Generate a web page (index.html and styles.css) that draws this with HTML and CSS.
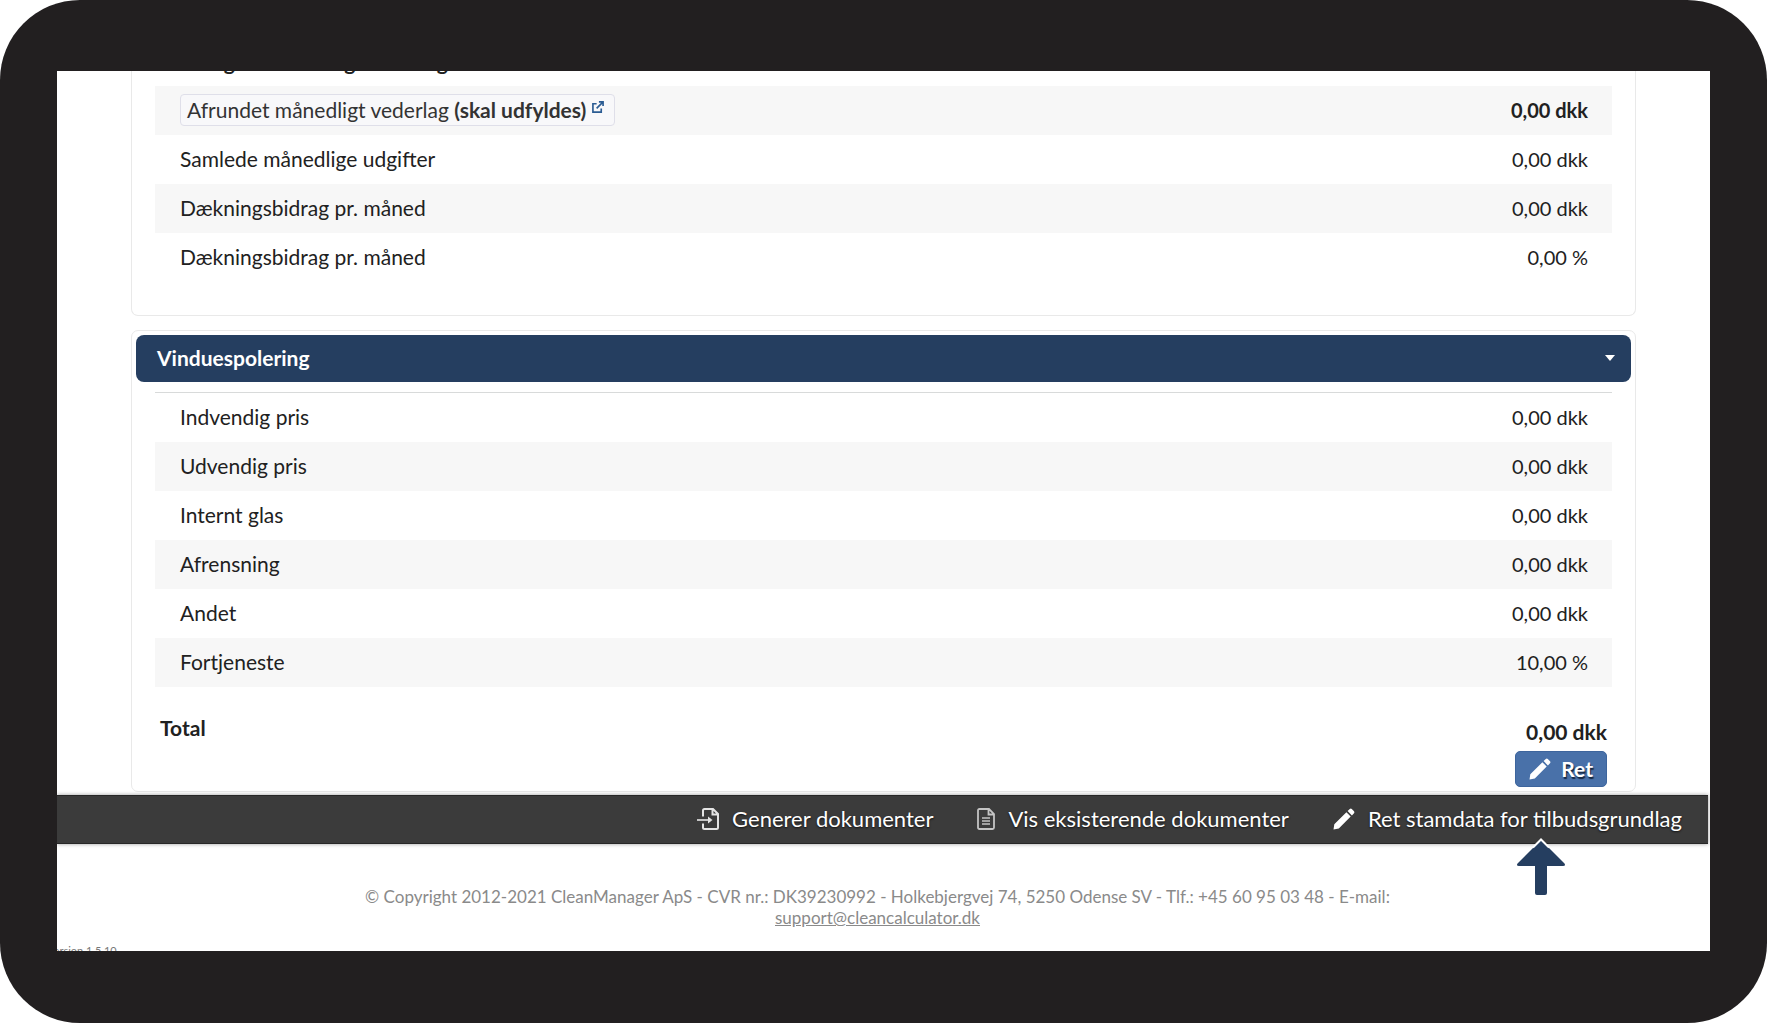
FILE: index.html
```html
<!DOCTYPE html>
<html lang="da">
<head>
  <meta charset="UTF-8" />
  <meta name="viewport" content="width=device-width, initial-scale=1.0"/>
  <title>CleanCalculator</title>
  <link rel="stylesheet" href="styles.css">
</head>
<body>

  <div class="tablet">
    <div class="screen">

      <main class="content">
        <section class="panel panel-first">
          <table class="prices">
            <tr class="scrolled"><th scope="row"><div><b>Beregnet månedligt vederlag</b></div></th><td></td></tr>
            <tr class="striped">
              <th scope="row">
                <a href="#" class="field-link">Afrundet månedligt vederlag <b>(skal udfyldes)</b>
                  <svg width="12" height="12" viewBox="0 0 13 13" fill="none" stroke="#2b5c93" stroke-width="1.800">
                    <path d="M5 3H1v9h9V8M7.500 1H12v4.500M12 1L5 8"/>
                  </svg>
                </a>
              </th>
              <td><b>0,00 dkk</b></td>
            </tr>
            <tr><th scope="row">Samlede månedlige udgifter</th><td>0,00 dkk</td></tr>
            <tr class="striped"><th scope="row">Dækningsbidrag pr. måned</th><td>0,00 dkk</td></tr>
            <tr><th scope="row">Dækningsbidrag pr. måned</th><td>0,00 %</td></tr>
          </table>
        </section>

        <section class="panel panel-windows">
          <button class="panel-header">
            Vinduespolering
            <svg width="10" height="6" viewBox="0 0 10 6"><path d="M0 0h10L5 6z" fill="#fff"/></svg>
          </button>
          <div class="panel-body">
            <table class="prices">
              <tr><th scope="row">Indvendig pris</th><td>0,00 dkk</td></tr>
              <tr class="striped"><th scope="row">Udvendig pris</th><td>0,00 dkk</td></tr>
              <tr><th scope="row">Internt glas</th><td>0,00 dkk</td></tr>
              <tr class="striped"><th scope="row">Afrensning</th><td>0,00 dkk</td></tr>
              <tr><th scope="row">Andet</th><td>0,00 dkk</td></tr>
              <tr class="striped"><th scope="row">Fortjeneste</th><td>10,00 %</td></tr>
            </table>
          </div>
          <div class="total">
            <b>Total</b>
            <div class="total-right">
              <b>0,00 dkk</b>
              <button class="edit">
                <svg width="22" height="22" viewBox="0 0 22 22" fill="#fff">
                  <path d="M0.500 21.500L1.300 16.200 13.400 4.300 17.700 8.600 5.800 20.500zM14.600 3.100L16.800 1Q17.800 0.200 18.800 1L21 3.300Q21.900 4.300 21 5.300L18.900 7.400z"/>
                </svg>
                Ret
              </button>
            </div>
          </div>
        </section>
      </main>

      <nav class="toolbar">
        <button>
          <svg width="22" height="22" viewBox="0 0 22 22" fill="none" stroke="#e4e4e4" stroke-width="2">
            <path d="M6 8.500V2.500Q6 1 7.500 1H16l5 5v13.500Q21 21 19.500 21h-12Q6 21 6 19.500V15.500M15.500 1v5.500H21"/>
            <path d="M0 12h12" stroke="#c4c4c4"/>
            <path d="M11 8.500L15.500 12l-4.500 3.500z" fill="#e4e4e4" stroke="none"/>
          </svg>
          Generer dokumenter
        </button>
        <button>
          <svg width="18" height="22" viewBox="0 0 18 22" fill="none" stroke="#c4c4c4" stroke-width="1.800">
            <path d="M2.500 1H12l5 5v13.500Q17 21 15.500 21h-13Q1 21 1 19.500v-17Q1 1 2.500 1zM11.500 1v5.500H17"/>
            <path d="M5 10h8M5 13h8M5 16h8" stroke-width="1.400"/>
          </svg>
          Vis eksisterende dokumenter
        </button>
        <button>
          <svg width="22" height="22" viewBox="0 0 22 22" fill="#fff">
            <path d="M0.500 21.500L1.300 16.200 13.400 4.300 17.700 8.600 5.800 20.500zM14.600 3.100L16.800 1Q17.800 0.200 18.800 1L21 3.300Q21.900 4.300 21 5.300L18.900 7.400z"/>
          </svg>
          Ret stamdata for tilbudsgrundlag
        </button>
        <svg class="pointer" width="50" height="58" viewBox="0 0 50 58">
          <path d="M25 2L48.500 25.500Q50 28 47 28H31v27q0 2-2 2h-8q-2 0-2-2V28H3Q0 28 1.500 25.500z" fill="#253e60"/>
          <path d="M17 9.500L25 1.500l8 8" fill="none" stroke="#fff" stroke-width="2"/>
        </svg>
      </nav>

      <footer class="footer">
        © Copyright 2012-2021 CleanManager ApS - CVR nr.: DK39230992 - Holkebjergvej 74, 5250 Odense SV - Tlf.: +45 60 95 03 48 - E-mail:<br>
        <a href="mailto:support@cleancalculator.dk">support@cleancalculator.dk</a>
      </footer>
      <small class="version">Version 1.5.10</small>

    </div>
  </div>

</body>
</html>
```
FILE: styles.css
```css
* {
  box-sizing: border-box;
}
body {
  margin: 0;
  background: #fff;
  color: #212121;
  font-family: Lato, "Liberation Sans", sans-serif;
  font-size: 21px;
  line-height: 24px;
}
button {
  border: 0;
  font: inherit;
  color: #fff;
  cursor: pointer;
}
.tablet {
  min-height: 100vh;
  padding: 71px 57px 72px;
  background: #221f20;
  border-radius: 80px;
  display: flex;
}
.screen {
  flex: 1;
  position: relative;
  overflow: hidden;
  background: #fff;
}

/* price panels */
.content {
  padding: 0 74px 3px;
}
.panel {
  border: 1px solid #e9e9e9;
  border-radius: 7px;
}
.panel-first {
  border-top: 0;
  border-radius: 0 0 7px 7px;
  padding: 0 23px 33px;
  margin-bottom: 14px;
}
.prices {
  width: 100%;
  border-collapse: collapse;
}
.prices th,
.prices td {
  height: 49px;
  padding: 0 24px 2px 25px;
  font-weight: normal;
  text-align: left;
}
.prices td {
  font-size: 20px;
  text-align: right;
}
.prices .striped {
  background: #f7f7f7;
}
.prices .scrolled th,
.prices .scrolled td {
  height: 15px;
  padding-bottom: 0;
  vertical-align: top;
}
.scrolled div {
  height: 15px;
  display: flex;
  align-items: flex-end;
  padding-bottom: 12px;
}
.field-link {
  display: inline-block;
  padding: 3px 10px 3px 6px;
  border: 1px solid #dfdfe9;
  border-radius: 4px;
  background: #f8f8fa;
  color: #333;
  text-decoration: none;
}
.field-link svg {
  vertical-align: 5px;
}
.panel-windows {
  padding: 4px;
}
.panel-header {
  width: 100%;
  height: 47px;
  padding: 0 16px 1px 21px;
  border-radius: 8px;
  background: #253e60;
  font-weight: bold;
  display: flex;
  align-items: center;
  justify-content: space-between;
}
.panel-body {
  margin: 10px 19px 0;
  border-top: 1px solid #d8dada;
}
.total {
  padding: 29px 24px 0;
  display: flex;
  justify-content: space-between;
}
.total-right {
  padding-top: 4px;
  display: flex;
  flex-direction: column;
  align-items: flex-end;
  gap: 7px;
}
.edit {
  height: 36px;
  padding: 0 13px;
  border: 1px solid #3d659d;
  border-radius: 5px;
  background: #4971a9;
  font-weight: bold;
  text-shadow: 1px 2px 1px #152741;
  display: flex;
  align-items: center;
  gap: 10px;
}

/* bottom actions */
.toolbar {
  position: relative;
  height: 49px;
  margin-right: 2px;
  padding: 0 26px 2px 0;
  background: #3b3b3b;
  border: solid #272727;
  border-width: 1px 0;
  box-shadow: 0 0 4px rgba(0,0,0,0.4);
  display: flex;
  align-items: center;
  justify-content: flex-end;
  gap: 44px;
}
.toolbar button {
  padding: 0;
  background: none;
  font-size: 22px;
  text-shadow: 0 1px 2px #111;
  display: flex;
  align-items: center;
  gap: 13px;
}
.pointer {
  position: absolute;
  top: 42px;
  right: 142px;
}
.footer {
  padding: 42px 0 22px;
  margin-right: 12px;
  color: #8a8a8a;
  font-size: 17px;
  line-height: 21px;
  text-align: center;
}
.footer a {
  color: inherit;
}
.version {
  position: absolute;
  left: -10px;
  bottom: -8px;
  color: #777;
  font-size: 11px;
  line-height: 16px;
}
```
